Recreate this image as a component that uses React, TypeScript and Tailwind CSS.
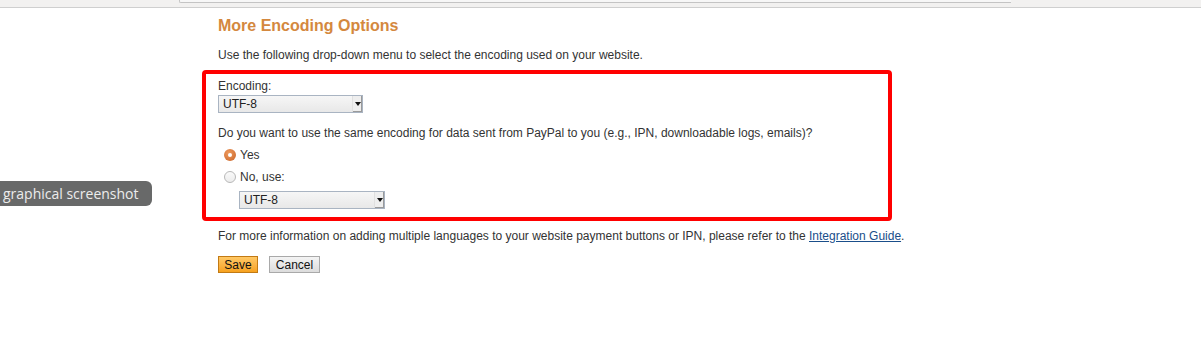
import React from "react";

function Select({ width }: { width: number }) {
  return (
    <div
      className="flex h-[18px] items-stretch border border-[#a9b4c2] bg-gradient-to-b from-[#f6f6f6] to-[#e8e8e8]"
      style={{ width }}
    >
      <div className="flex-1 pl-[4px] text-[12px] leading-[16px] text-[#222]">UTF-8</div>
      <div className="relative w-[10px] border-l border-[#e0e0e0] bg-[#eeeeee] shadow-[inset_-1px_-1px_0_#9a9a9a]">
        <div className="absolute left-[2px] top-[6px] h-0 w-0 border-x-[3px] border-t-[4px] border-x-transparent border-t-[#111]" />
      </div>
    </div>
  );
}

export default function App() {
  return (
    <div
      className="relative h-[355px] w-[1201px] overflow-hidden bg-white text-[12px] text-[#333]"
      style={{ fontFamily: '"Liberation Sans", Arial, sans-serif' }}
    >
      {/* top browser strip */}
      <div className="h-[8px] border-b border-[#cfcfcf] bg-[#f2f1f0]">
        <div className="ml-[179px] h-[3px] w-[832px] rounded-bl-[2px] border-b border-l border-[#c4c4c4] bg-[#f7f7f7]" />
      </div>

      {/* tooltip */}
      <div
        className="absolute left-0 top-[181px] flex h-[25px] w-[152px] items-center whitespace-nowrap rounded-r-[6px] bg-[#686969] pl-[3px] text-[14px] text-[#ececec]"
        style={{ fontFamily: '"Open Sans", "DejaVu Sans", sans-serif' }}
      >
        graphical screenshot
      </div>

      <div className="ml-[202px] w-[690px]">
        <h2 className="ml-[16px] mt-[9px] text-[16px] font-bold leading-[18px] text-[#d4883e]">
          More Encoding Options
        </h2>
        <p className="ml-[16px] mt-[13px] leading-[14px]">
          Use the following drop-down menu to select the encoding used on your website.
        </p>

        <div className="mt-[8px] h-[151px] rounded-[4px] border-[4px] border-[#ff0000] pl-[12px] pt-[5px]">
          <div className="leading-[14px]">Encoding:</div>
          <div className="mt-[2px]">
            <Select width={145} />
          </div>
          <p className="mt-[13px] leading-[14px]">
            Do you want to use the same encoding for data sent from PayPal to you (e.g., IPN, downloadable logs, emails)?
          </p>
          <div className="mt-[8px] flex items-center">
            <div className="ml-[6px] flex h-[12px] w-[12px] items-center justify-center rounded-full bg-[radial-gradient(circle_at_40%_35%,#ef9a5c,#c8642a)]">
              <div className="h-[4px] w-[4px] rounded-full bg-white" />
            </div>
            <span className="ml-[4px] leading-[14px]">Yes</span>
          </div>
          <div className="mt-[8px] flex items-center">
            <div className="ml-[6px] h-[12px] w-[12px] rounded-full border border-[#b8b8b8] bg-gradient-to-b from-[#fafafa] to-[#ececec]" />
            <span className="ml-[4px] leading-[14px]">No, use:</span>
          </div>
          <div className="ml-[21px] mt-[7px]">
            <Select width={146} />
          </div>
        </div>

        <p className="ml-[16px] mt-[8px] whitespace-nowrap leading-[14px]">
          For more information on adding multiple languages to your website payment buttons or IPN, please refer to the{" "}
          <a className="text-[#1a4e8a] underline">Integration Guide</a>.
        </p>

        <div className="ml-[16px] mt-[13px] flex gap-[11px]">
          <button className="h-[17px] w-[40px] border border-[#c27a14] bg-gradient-to-b from-[#ffc864] to-[#f7a21c] text-[12px] leading-[14px] text-[#111]">
            Save
          </button>
          <button className="h-[17px] w-[51px] border border-[#a9a9a9] bg-gradient-to-b from-[#f4f4f4] to-[#dcdcdc] text-[12px] leading-[14px] text-[#111]">
            Cancel
          </button>
        </div>
      </div>
    </div>
  );
}
